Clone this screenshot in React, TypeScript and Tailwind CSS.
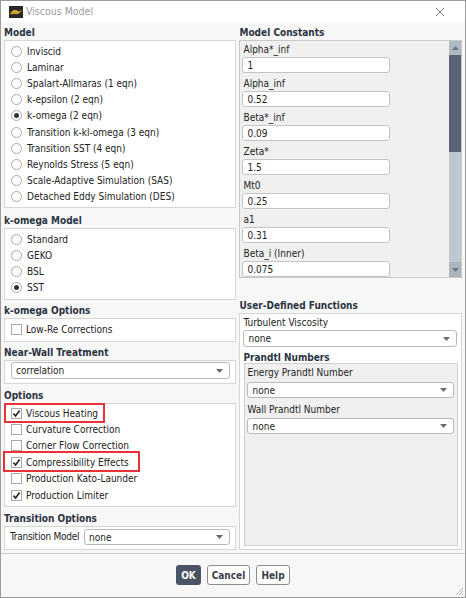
import React from "react";

const FONT = { fontFamily: '"DejaVu Sans Condensed", "DejaVu Sans", "Liberation Sans", sans-serif' };

function Radio({ label, checked }: { label: string; checked?: boolean }) {
  return (
    <div className="flex items-center h-[16.2px]">
      <span className="w-[11px] h-[11px] rounded-full border border-[#a9a9a9] bg-white flex items-center justify-center ml-[6px] mr-[5px] shrink-0">
        {checked && <span className="w-[5px] h-[5px] rounded-full bg-[#333]" />}
      </span>
      <span className="whitespace-nowrap">{label}</span>
    </div>
  );
}

function Check({ label, checked, mark }: { label: string; checked?: boolean; mark?: string }) {
  return (
    <div className="relative flex items-center h-[16.4px]">
      {mark && <span className={mark} />}
      <span className="w-[11px] h-[11px] border border-[#a9a9a9] bg-white flex items-center justify-center ml-[6px] mr-[4px] shrink-0">
        {checked && (
          <svg width="9" height="9" viewBox="0 0 9 9">
            <path d="M1.5 4.6 L3.6 7 L7.6 1.6" fill="none" stroke="#222" strokeWidth="1.6" />
          </svg>
        )}
      </span>
      <span className="whitespace-nowrap">{label}</span>
    </div>
  );
}

function Dropdown({ value, h = "h-[17px]" }: { value: string; h?: string }) {
  return (
    <div className={`${h} bg-white border border-[#b9b9b9] rounded-[3px] flex items-center justify-between pl-[4px] pr-[6px]`}>
      <span>{value}</span>
      <svg width="7" height="4" viewBox="0 0 7 4">
        <path d="M0 0 H7 L3.5 4 Z" fill="#6b6b6b" />
      </svg>
    </div>
  );
}

function Header({ children, cls = "" }: { children: React.ReactNode; cls?: string }) {
  return <div className={`h-[14px] leading-[14px] font-bold text-[#2a3341] whitespace-nowrap ${cls}`}>{children}</div>;
}

function Field({ label, value, first }: { label: string; value: string; first?: boolean }) {
  return (
    <div className={first ? "" : "mt-[4px]"}>
      <div className="h-[14px] leading-[14px] pl-[1px]">{label}</div>
      <div className="w-[148px] h-[16px] bg-white border border-[#c4c4c4] rounded-[3px] flex items-center pl-[4px]">{value}</div>
    </div>
  );
}

export default function App() {
  return (
    <div style={FONT} className="w-[466px] h-[598px] border border-[#9c9c9c] bg-[#f7f7f7] text-[10px] text-[#222] relative overflow-hidden flex flex-col">
      {/* Title bar */}
      <div className="h-[21px] bg-white flex items-center shrink-0 relative">
        <svg width="14" height="12" viewBox="0 0 14 12" className="ml-[8px] mr-[3px]">
          <rect width="14" height="12" fill="#2b2722" />
          <path d="M1 8 C3 4, 6 3, 9 5 C11 6, 12 4, 13 3 C12 7, 9 9, 6 8 C4 7.5, 2.5 9, 1 8 Z" fill="#c99a2e" />
          <path d="M3 6 C5 4.5, 7 4.5, 9 6" fill="none" stroke="#e6c060" strokeWidth="0.8" />
        </svg>
        <span className="text-[#9a9a9a] text-[10.5px]">Viscous Model</span>
        <svg width="10" height="10" viewBox="0 0 10 10" className="absolute left-[434px] top-[6px]">
          <path d="M1 1 L9 9 M9 1 L1 9" stroke="#7a7a7a" strokeWidth="1" />
        </svg>
      </div>

      {/* Body */}
      <div className="flex pt-[4px] pl-[3px] pr-[3px] gap-[3px]">
        {/* Left column */}
        <div className="w-[233px] flex flex-col">
          <Header>Model</Header>
          <div className="h-[168px] bg-white border border-[#d6d6d6] pt-[2px]">
            <Radio label="Inviscid" />
            <Radio label="Laminar" />
            <Radio label="Spalart-Allmaras (1 eqn)" />
            <Radio label="k-epsilon (2 eqn)" />
            <Radio label="k-omega (2 eqn)" checked />
            <Radio label="Transition k-kl-omega (3 eqn)" />
            <Radio label="Transition SST (4 eqn)" />
            <Radio label="Reynolds Stress (5 eqn)" />
            <Radio label="Scale-Adaptive Simulation (SAS)" />
            <Radio label="Detached Eddy Simulation (DES)" />
          </div>

          <Header cls="mt-[6px]">k-omega Model</Header>
          <div className="h-[72px] bg-white border border-[#d6d6d6] pt-[2px]">
            <Radio label="Standard" />
            <Radio label="GEKO" />
            <Radio label="BSL" />
            <Radio label="SST" checked />
          </div>

          <Header cls="mt-[4px]">k-omega Options</Header>
          <div className="h-[24px] bg-white border border-[#d6d6d6] pt-[2px]">
            <Check label="Low-Re Corrections" />
          </div>

          <Header cls="mt-[4px]">Near-Wall Treatment</Header>
          <div className="h-[24px] bg-white border border-[#d6d6d6] pt-[1px] pl-[6px] pr-[5px]">
            <Dropdown value="correlation" />
          </div>

          <Header cls="mt-[5px]">Options</Header>
          <div className="h-[104px] bg-white border border-[#d6d6d6] pt-[1px]">
            <Check
              label="Viscous Heating"
              checked
              mark="absolute left-[-1px] top-[-2px] w-[101px] h-[20px] border-2 border-[#e8323a] pointer-events-none"
            />
            <Check label="Curvature Correction" />
            <Check label="Corner Flow Correction" />
            <Check
              label="Compressibility Effects"
              checked
              mark="absolute left-[-2px] top-[-3px] w-[137px] h-[21px] border-2 border-[#e8323a] pointer-events-none"
            />
            <Check label="Production Kato-Launder" />
            <Check label="Production Limiter" checked />
          </div>

          <Header cls="mt-[5px]">Transition Options</Header>
          <div className="h-[24px] bg-white border border-[#d6d6d6] pt-[2px] pl-[5px] pr-[5px] flex items-start">
            <span className="w-[74px] h-[16px] leading-[16px] whitespace-nowrap tracking-[-0.25px]">Transition Model</span>
            <div className="flex-1">
              <Dropdown value="none" h="h-[16px]" />
            </div>
          </div>
        </div>

        {/* Right column */}
        <div className="w-[223px] flex flex-col">
          <Header>Model Constants</Header>
          <div className="h-[238px] bg-[#f0f0f0] border border-[#c9c9c9] flex overflow-hidden">
            <div className="flex-1 pt-[2px] pl-[2px] overflow-hidden">
              <Field first label="Alpha*_inf" value="1" />
              <Field label="Alpha_inf" value="0.52" />
              <Field label="Beta*_inf" value="0.09" />
              <Field label="Zeta*" value="1.5" />
              <Field label="Mt0" value="0.25" />
              <Field label="a1" value="0.31" />
              <Field label="Beta_i (Inner)" value="0.075" />
            </div>
            <div className="w-[12px] flex flex-col bg-[#bfc8ce]">
              <div className="h-[14px] bg-[#aeb9c0] flex items-center justify-center">
                <svg width="7" height="4" viewBox="0 0 7 4"><path d="M0 4 H7 L3.5 0 Z" fill="#6e777e" /></svg>
              </div>
              <div className="h-[97px] bg-[#5a6273]" />
              <div className="flex-1" />
              <div className="h-[15px] bg-[#aab5bd] flex items-center justify-center">
                <svg width="7" height="4" viewBox="0 0 7 4"><path d="M0 0 H7 L3.5 4 Z" fill="#6e777e" /></svg>
              </div>
            </div>
          </div>

          <Header cls="mt-[21px]">User-Defined Functions</Header>
          <div className="h-[237px] bg-white border border-[#d6d6d6] pt-[2px] pl-[3px] pr-[4px]">
            <div className="h-[14px] leading-[14px]">Turbulent Viscosity</div>
            <Dropdown value="none" />
            <div className="h-[12px] leading-[12px] mt-[5px] font-bold text-[#2a3341]">Prandtl Numbers</div>
            <div className="h-[183px] ml-[1px] mr-[-1px] -mt-[1px] bg-[#f0f0f0] border border-[#cfcfcf] pt-[2px] pl-[2px] pr-[3px]">
              <div className="h-[14px] leading-[14px]">Energy Prandtl Number</div>
              <div className="mt-[2px]">
                <Dropdown value="none" h="h-[16px]" />
              </div>
              <div className="h-[14px] leading-[14px] mt-[5px]">Wall Prandtl Number</div>
              <div className="mt-[1px]">
                <Dropdown value="none" h="h-[16px]" />
              </div>
            </div>
          </div>
        </div>
      </div>

      {/* Separator */}
      <div className="h-[1px] bg-[#cfcfcf] mt-[3px] shrink-0" />

      {/* Buttons */}
      <div className="flex justify-center gap-[6px] mt-[11px]">
        <div className="w-[25px] h-[20px] rounded-[3px] bg-[#4a5464] text-white font-bold flex items-center justify-center">OK</div>
        <div className="w-[43px] h-[20px] rounded-[3px] bg-white border border-[#8c8c8c] text-[#3a3f48] font-bold flex items-center justify-center">Cancel</div>
        <div className="w-[34px] h-[20px] rounded-[3px] bg-white border border-[#8c8c8c] text-[#3a3f48] font-bold flex items-center justify-center">Help</div>
      </div>

      {/* Resize grip */}
      <svg width="10" height="10" viewBox="0 0 10 10" className="absolute right-[1px] bottom-[1px]">
        <path d="M9 2 L2 9 M9 5 L5 9 M9 8 L8 9" stroke="#b0b0b0" strokeWidth="1" />
      </svg>
    </div>
  );
}
